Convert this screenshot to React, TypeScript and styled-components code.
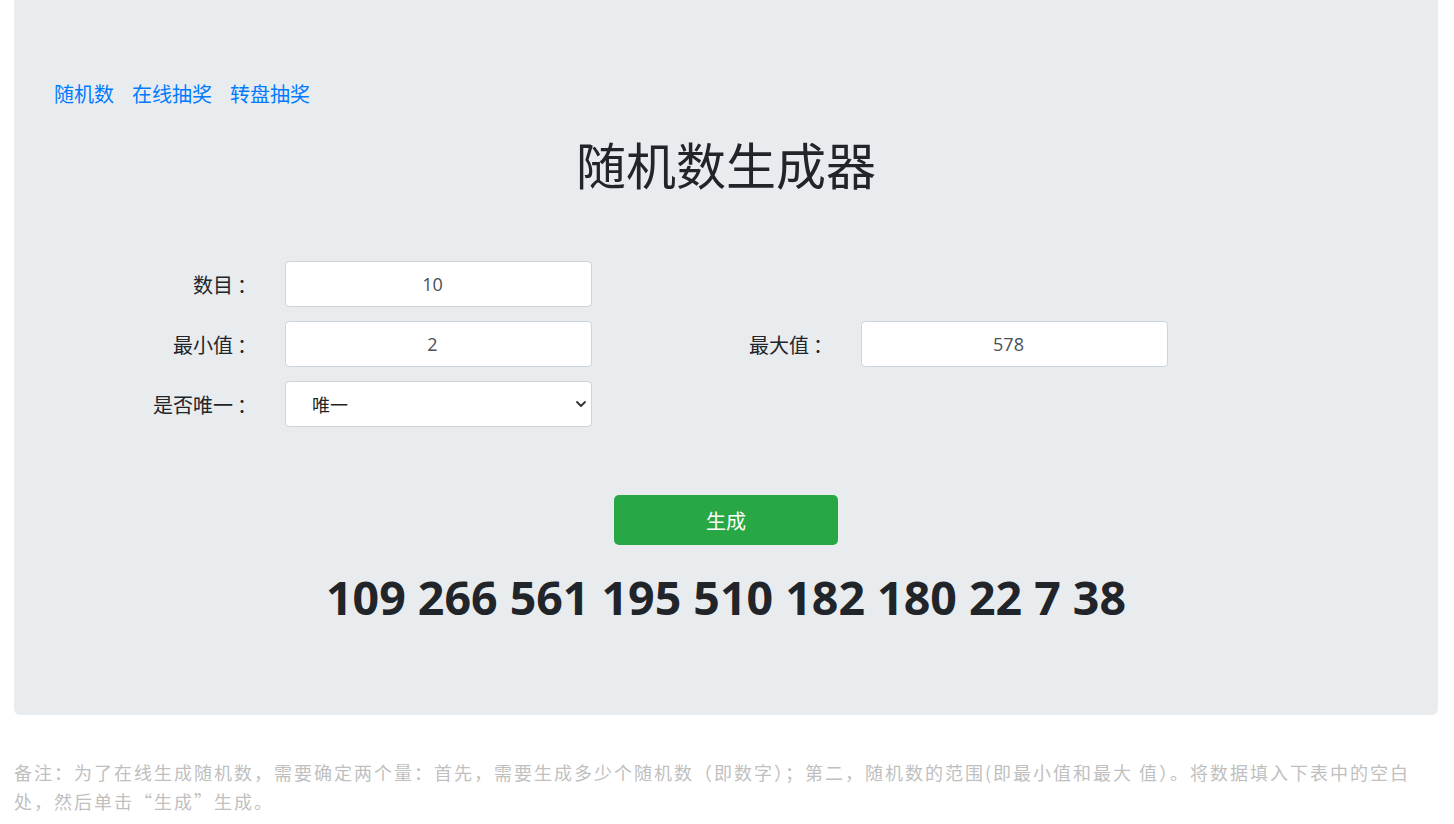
import React from "react";
import styled, { createGlobalStyle } from "styled-components";

const GlobalStyle = createGlobalStyle`
  html, body { margin: 0; padding: 0; background: #fff; }
  body {
    font-family: "Open Sans", "Noto Sans CJK SC", sans-serif;
    color: #212529;
  }
  * { box-sizing: border-box; }
`;

const Page = styled.div`
  padding: 0 16px 0 14px;
`;

const Panel = styled.div`
  background: #e9ecef;
  border-radius: 0 0 6px 6px;
  padding: 79px 40px 90px;
  display: flex;
  flex-direction: column;
`;

const Nav = styled.nav`
  display: flex;
  gap: 18px;
`;

const NavLink = styled.a`
  font-size: 20px;
  line-height: 30px;
  color: #007bff;
  text-decoration: none;
  font-family: "Noto Sans CJK SC", sans-serif;
`;

const Title = styled.h1`
  margin: 24px 0 0;
  text-align: center;
  font-size: 50px;
  line-height: 60px;
  font-weight: 400;
  color: #212529;
  font-family: "Noto Sans CJK SC", sans-serif;
`;

const Form = styled.div`
  margin-top: 68px;
  display: grid;
  grid-template-columns: 203px 307px 213px 307px;
  grid-auto-rows: 46px;
  column-gap: 28px;
  row-gap: 14px;
`;

const Label = styled.label`
  display: flex;
  align-items: center;
  justify-content: flex-end;
  font-size: 20px;
  color: #212529;
  font-family: "Noto Sans CJK SC", sans-serif;
  white-space: nowrap;
`;

const Colon = styled.span`
  margin-left: 4px;
`;

const Input = styled.input`
  width: 100%;
  height: 46px;
  border: 1px solid #ced4da;
  border-radius: 4px;
  background: #fff;
  padding: 0 12px 0 0;
  text-align: center;
  font-size: 18px;
  color: #495057;
  font-family: "Open Sans", "Noto Sans CJK SC", sans-serif;
  outline: none;
`;

const SelectWrap = styled.div`
  position: relative;
  height: 46px;
`;

const Select = styled.select`
  appearance: none;
  -webkit-appearance: none;
  width: 100%;
  height: 46px;
  border: 1px solid #ced4da;
  border-radius: 4px;
  background: #fff;
  padding: 0 0 0 26px;
  font-size: 18px;
  color: #212529;
  font-family: "Noto Sans CJK SC", sans-serif;
  outline: none;
`;

const Chevron = styled.svg`
  position: absolute;
  right: 4px;
  top: 50%;
  transform: translateY(-50%);
  pointer-events: none;
`;

const ButtonRow = styled.div`
  margin-top: 68px;
  display: flex;
  justify-content: center;
`;

const Button = styled.button`
  width: 224px;
  height: 50px;
  border: none;
  border-radius: 5px;
  background: #28a745;
  color: #fff;
  font-size: 20px;
  font-family: "Noto Sans CJK SC", sans-serif;
  cursor: pointer;
`;

const Result = styled.div`
  margin-top: 24px;
  text-align: center;
  font-size: 46.5px;
  line-height: 56px;
  font-weight: 700;
  color: #212529;
  font-family: "Open Sans", sans-serif;
`;

const Note = styled.p`
  margin: 43px 0 0;
  font-size: 18px;
  line-height: 29px;
  letter-spacing: 2px;
  color: #bfbfbf;
  font-family: "Noto Sans CJK SC", sans-serif;
`;

const Empty = styled.div``;

export default function App() {
  return (
    <>
      <GlobalStyle />
      <Page>
        <Panel>
          <Nav>
            <NavLink href="#">随机数</NavLink>
            <NavLink href="#">在线抽奖</NavLink>
            <NavLink href="#">转盘抽奖</NavLink>
          </Nav>
          <Title>随机数生成器</Title>
          <Form>
            <Label>数目<Colon>：</Colon></Label>
            <Input defaultValue="10" />
            <Empty />
            <Empty />
            <Label>最小值<Colon>：</Colon></Label>
            <Input defaultValue="2" />
            <Label>最大值<Colon>：</Colon></Label>
            <Input defaultValue="578" />
            <Label>是否唯一<Colon>：</Colon></Label>
            <SelectWrap>
              <Select defaultValue="1">
                <option value="1">唯一</option>
                <option value="0">不唯一</option>
              </Select>
              <Chevron width="14" height="14" viewBox="0 0 14 14">
                <path d="M3 5 L7 9 L11 5" fill="none" stroke="#333" strokeWidth="1.8" strokeLinecap="round" strokeLinejoin="round" />
              </Chevron>
            </SelectWrap>
          </Form>
          <ButtonRow>
            <Button>生成</Button>
          </ButtonRow>
          <Result>109 266 561 195 510 182 180 22 7 38</Result>
        </Panel>
        <Note>
          备注：为了在线生成随机数，需要确定两个量：首先，需要生成多少个随机数（即数字）；第二，随机数的范围(即最小值和最大 值）。将数据填入下表中的空白处，然后单击“生成”生成。
        </Note>
      </Page>
    </>
  );
}
